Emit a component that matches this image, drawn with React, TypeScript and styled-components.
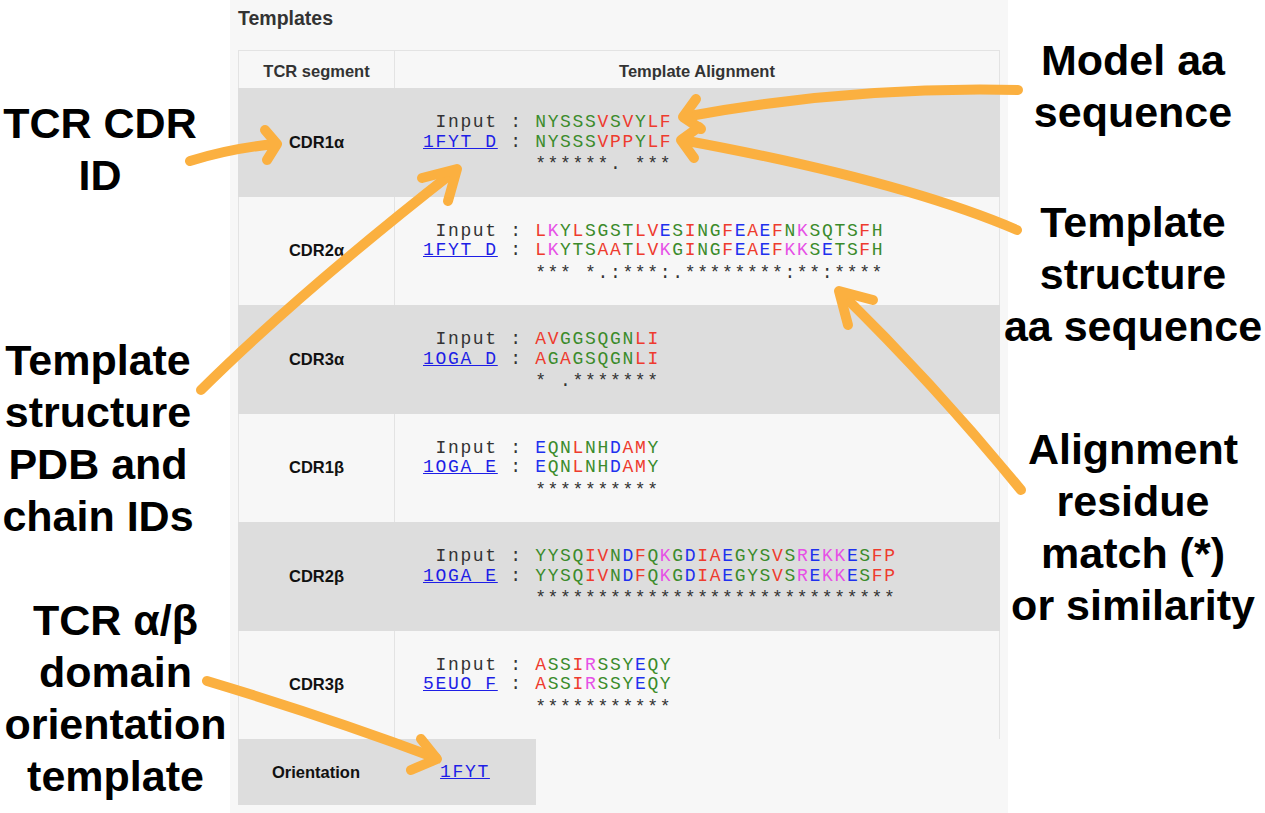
import React from "react";
import styled, { createGlobalStyle } from "styled-components";

const GlobalStyle = createGlobalStyle`
  html, body { margin: 0; padding: 0; background: #ffffff; }
  body { font-family: "Liberation Sans", Arial, Helvetica, sans-serif; }
`;

const RED = "#ee3b2e";
const GREEN = "#3b8b2b";
const BLUE = "#2030ee";
const MAGENTA = "#e650e6";
const LINK = "#1e1ee6";
const ORANGE = "#fbb040";

const colorOf = (c: string): string => {
  if ("AVFPMILW".includes(c)) return RED;
  if ("DE".includes(c)) return BLUE;
  if ("RK".includes(c)) return MAGENTA;
  return GREEN;
};

type Seg = {
  name: string;
  tpl: string;
  input: string;
  templ: string;
  match: string;
};

const segments: Seg[] = [
  { name: "CDR1α", tpl: "1FYT_D", input: "NYSSSVSVYLF", templ: "NYSSSVPPYLF", match: "******. ***" },
  {
    name: "CDR2α",
    tpl: "1FYT_D",
    input: "LKYLSGSTLVESINGFEAEFNKSQTSFH",
    templ: "LKYTSAATLVKGINGFEAEFKKSETSFH",
    match: "*** *.:***:.********:**:****",
  },
  { name: "CDR3α", tpl: "1OGA_D", input: "AVGGSQGNLI", templ: "AGAGSQGNLI", match: "* .*******" },
  { name: "CDR1β", tpl: "1OGA_E", input: "EQNLNHDAMY", templ: "EQNLNHDAMY", match: "**********" },
  {
    name: "CDR2β",
    tpl: "1OGA_E",
    input: "YYSQIVNDFQKGDIAEGYSVSREKKESFP",
    templ: "YYSQIVNDFQKGDIAEGYSVSREKKESFP",
    match: "*****************************",
  },
  { name: "CDR3β", tpl: "5EUO_F", input: "ASSIRSSYEQY", templ: "ASSIRSSYEQY", match: "***********" },
];

/* ---------- page frame ---------- */

const Canvas = styled.div`
  position: relative;
  width: 1265px;
  height: 813px;
  display: grid;
  grid-template-columns: 230px 778px 257px;
  background: #ffffff;
  overflow: hidden;
`;

const NoteColumn = styled.div`
  position: relative;
`;

const Note = styled.div<{ $top: number; $left: number; $width: number }>`
  position: absolute;
  top: ${(p) => p.$top}px;
  left: ${(p) => p.$left}px;
  width: ${(p) => p.$width}px;
  text-align: center;
  font-family: "Liberation Sans", Arial, Helvetica, sans-serif;
  font-weight: bold;
  font-size: 43px;
  line-height: 52px;
  color: #000000;
  white-space: nowrap;
`;

/* ---------- panel ---------- */

const Panel = styled.section`
  background: #f7f7f7;
  padding: 6px 8px 0 8px;
  display: flex;
  flex-direction: column;
`;

const Heading = styled.h2`
  margin: 0 0 20px 0;
  font-family: "Liberation Sans", Arial, Helvetica, sans-serif;
  font-weight: bold;
  font-size: 19.5px;
  line-height: 24px;
  color: #333333;
`;

const Table = styled.div`
  width: 762px;
  display: flex;
  flex-direction: column;
`;

const Row = styled.div<{ $gray?: boolean; $header?: boolean }>`
  display: grid;
  grid-template-columns: 156px 1fr;
  height: ${(p) => (p.$header ? "38px" : "108.5px")};
  box-sizing: border-box;
  background: ${(p) => (p.$gray ? "#dddddd" : "#f7f7f7")};
  border-right: 1px solid ${(p) => (p.$gray ? "#dddddd" : "#e3e3e3")};
  border-top: ${(p) => (p.$header ? "1px solid #e3e3e3" : "none")};
`;

const HeadCell = styled.div`
  display: flex;
  align-items: center;
  justify-content: center;
  padding-top: 3px;
  box-sizing: border-box;
  border-left: 1px solid #e3e3e3;
  font-family: "Liberation Sans", Arial, Helvetica, sans-serif;
  font-weight: bold;
  font-size: 16.5px;
  color: #333333;
`;

const SegCell = styled.div<{ $gray?: boolean }>`
  display: flex;
  align-items: center;
  justify-content: center;
  border-left: 1px solid ${(p) => (p.$gray ? "#dddddd" : "#e3e3e3")};
  font-family: "Liberation Sans", Arial, Helvetica, sans-serif;
  font-weight: bold;
  font-size: 16.5px;
  color: #111111;
`;

const AlignCell = styled.div<{ $gray?: boolean }>`
  display: flex;
  align-items: center;
  padding-left: 28px;
  border-left: 1px solid ${(p) => (p.$gray ? "#dddddd" : "#e3e3e3")};
`;

const Alignment = styled.div`
  font-family: "Liberation Mono", "Courier New", monospace;
  font-size: 18px;
  letter-spacing: 1.66px;
  line-height: 19.5px;
  color: #333333;
`;

const Line = styled.div<{ $shift?: boolean }>`
  white-space: pre;
  padding-top: ${(p) => (p.$shift ? "3px" : "0")};
  height: 19.5px;
  box-sizing: border-box;
`;

const Residue = styled.span<{ $c: string }>`
  color: ${(p) => p.$c};
`;

const PdbLink = styled.a`
  color: ${LINK};
  text-decoration: underline;
  cursor: pointer;
`;

const OrientTable = styled.div`
  width: 298px;
  height: 66px;
  display: grid;
  grid-template-columns: 156px 142px;
  background: #dddddd;
`;

const OrientLabel = styled.div`
  display: flex;
  align-items: center;
  justify-content: center;
  font-family: "Liberation Sans", Arial, Helvetica, sans-serif;
  font-weight: bold;
  font-size: 16.5px;
  color: #111111;
`;

const OrientLink = styled.div`
  display: flex;
  align-items: center;
  justify-content: center;
  font-family: "Liberation Mono", "Courier New", monospace;
  font-size: 18px;
  letter-spacing: 1.66px;
`;

/* ---------- arrows ---------- */

const ArrowLayer = styled.svg`
  position: absolute;
  left: 0;
  top: 0;
  width: 1265px;
  height: 813px;
  pointer-events: none;
  overflow: visible;
`;

const arrows: { body: string; head: string }[] = [
  { body: "M190,161 Q232,148 276,144", head: "M265,130 L277,144 L267,160" },
  { body: "M201,390 Q300,292 456,170", head: "M422,178 L457,169 L448,201" },
  { body: "M1018,90 Q850,86 684,117", head: "M696,99 L683,117 L701,129" },
  { body: "M1017,230 Q900,180 682,140", head: "M699,127 L681,140 L694,158" },
  { body: "M1021,490 Q935,385 840,292", head: "M873,300 L839,291 L848,325" },
  { body: "M207,681 Q330,718 436,758", head: "M421,739 L437,759 L411,770" },
];

const Arrows: React.FC = () => (
  <ArrowLayer viewBox="0 0 1265 813">
    {arrows.map((a, i) => (
      <g
        key={i}
        fill="none"
        stroke={ORANGE}
        strokeWidth={10}
        strokeLinecap="round"
        strokeLinejoin="round"
      >
        <path d={a.body} />
        <path d={a.head} />
      </g>
    ))}
  </ArrowLayer>
);

const Sequence: React.FC<{ seq: string }> = ({ seq }) => (
  <>
    {seq.split("").map((c, i) => (
      <Residue key={i} $c={colorOf(c)}>
        {c}
      </Residue>
    ))}
  </>
);

const SegmentRow: React.FC<{ seg: Seg; gray: boolean }> = ({ seg, gray }) => (
  <Row $gray={gray}>
    <SegCell $gray={gray}>{seg.name}</SegCell>
    <AlignCell $gray={gray}>
      <Alignment>
        <Line>
          {" Input : "}
          <Sequence seq={seg.input} />
        </Line>
        <Line>
          <PdbLink>{seg.tpl}</PdbLink>
          {" : "}
          <Sequence seq={seg.templ} />
        </Line>
        <Line $shift>{"         " + seg.match}</Line>
      </Alignment>
    </AlignCell>
  </Row>
);

export default function App() {
  return (
    <>
      <GlobalStyle />
      <Canvas>
        <NoteColumn>
          <Note $top={97} $left={0} $width={200}>
            TCR CDR
            <br />
            ID
          </Note>
          <Note $top={334} $left={0} $width={196}>
            Template
            <br />
            structure
            <br />
            PDB and
            <br />
            chain IDs
          </Note>
          <Note $top={594} $left={0} $width={231}>
            TCR α/β
            <br />
            domain
            <br />
            orientation
            <br />
            template
          </Note>
        </NoteColumn>

        <Panel>
          <Heading>Templates</Heading>
          <Table>
            <Row $header>
              <HeadCell>TCR segment</HeadCell>
              <HeadCell>Template Alignment</HeadCell>
            </Row>
            {segments.map((s, i) => (
              <SegmentRow key={s.name} seg={s} gray={i % 2 === 0} />
            ))}
          </Table>
          <OrientTable>
            <OrientLabel>Orientation</OrientLabel>
            <OrientLink>
              <PdbLink>1FYT</PdbLink>
            </OrientLink>
          </OrientTable>
        </Panel>

        <NoteColumn>
          <Note $top={34} $left={-5} $width={260}>
            Model aa
            <br />
            sequence
          </Note>
          <Note $top={196} $left={-5} $width={260}>
            Template
            <br />
            structure
            <br />
            aa sequence
          </Note>
          <Note $top={423} $left={-5} $width={260}>
            Alignment
            <br />
            residue
            <br />
            match (*)
            <br />
            or similarity
          </Note>
        </NoteColumn>

        <Arrows />
      </Canvas>
    </>
  );
}
